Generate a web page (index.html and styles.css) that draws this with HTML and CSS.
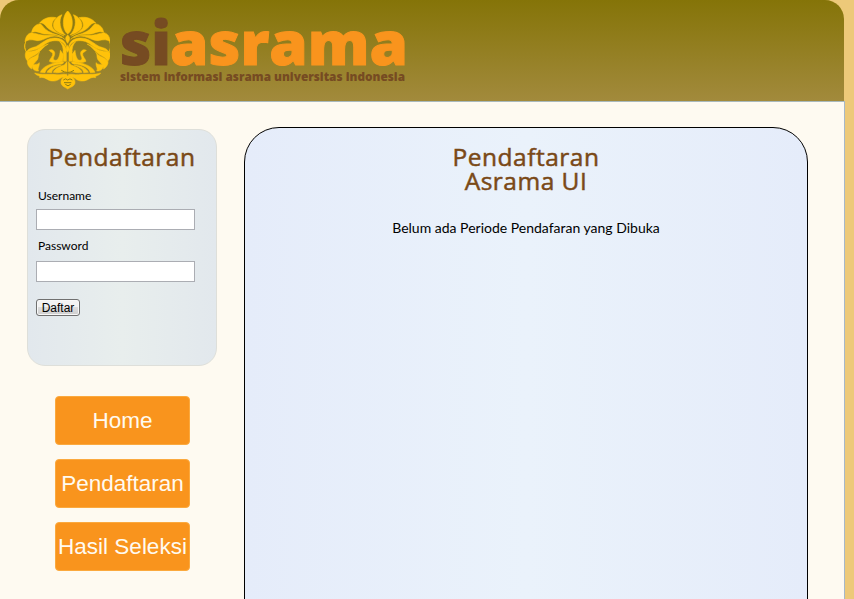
FILE: index.html
```html
<!DOCTYPE html>
<html lang="id">
<head>
<meta charset="utf-8">
<title>siasrama</title>
<link rel="stylesheet" href="styles.css">
</head>
<body>
<header class="header">
  <svg class="emblem" viewBox="72 30 258 240" aria-hidden="true">
    <defs>
      <g id="half">
        <path d="M186 44C170 50 160 62 160 75C160 92 177 99 196 105C180 90 175 62 186 44Z"/>
        <path d="M169 53C150 49 130 54 119 69C130 67 136 76 144 85C157 97 177 100 192 108C169 98 157 88 156 76C156 66 161 58 169 53Z"/>
        <path d="M121 71C105 73 97 84 95 97C108 92 117 98 128 101C154 105 178 100 194 118C181 105 161 103 145 94C133 87 129 78 121 71Z"/>
        <path d="M94 98C81 101 76 113 75 126C87 116 99 120 111 122C132 124 153 98 186 113C162 103 142 107 126 105C113 103 105 99 94 98Z"/>
        <path d="M77 126C71 137 73 147 79 156C88 142 100 144 111 138C131 126 145 110 174 115C193 119 200 132 200 145C194 127 181 122 165 122C142 122 133 137 117 145C104 151 90 150 80 157C75 147 73 137 77 126Z"/>
        <path d="M77 157C74 167 76 176 83 184C91 169 103 169 113 160C124 151 131 139 145 132C129 136 115 149 103 152C91 154 84 155 77 157Z"/>
        <path d="M82 185C81 192 86 201 95 207C96 194 106 188 113 178C117 167 113 164 119 157C107 173 92 170 82 185Z"/>
        <path d="M97 195C95 206 103 214 116 213C111 205 119 200 118 188C112 195 105 192 97 195Z"/>
        <path d="M147 151C155 146 166 152 164 163C163 171 157 176 163 180C174 185 179 169 181 151L190 163L188 184C176 188 158 190 148 184C150 175 159 169 158 161C156 155 151 157 147 151Z"/>
        <path d="M179 125C188 128 198 139 199 151L190 157C190 143 187 133 179 125Z"/>
        <path d="M190 153L199 149V184H190Z"/>
        <path d="M121 217C127 201 148 190 186 185C194 184 192 191 184 192C156 194 139 203 135 218Z"/>
        <path d="M141 217C147 204 164 196 184 195C163 203 156 209 155 218Z"/>
        <path d="M160 217C164 206 179 199 193 195L201 185V219C189 211 178 222 160 217Z"/>
        <path d="M104 219C123 226 148 221 171 224C185 225 190 220 201 224V231C182 227 178 245 158 243C141 243 137 229 119 233C122 226 109 228 104 219Z"/>
      </g>
    </defs>
    <g class="gold">
      <use href="#half"/>
      <use href="#half" transform="translate(406 0) scale(-1 1)"/>
      <path d="M203 33C195 39 190 53 190 68C190 84 196 97 203 102C211 97 217 84 217 68C217 53 211 39 203 33Z"/>
      <path d="M203 105C194 113 196 119 203 130C210 119 212 113 203 105ZM203 136L198 148L203 157L208 148Z"/>
      <path d="M203 228C191 228 183 236 183 247C183 257 191 260 203 267C216 260 225 257 225 247C225 236 216 228 203 228Z"/>
    </g>
    <path class="groove" d="M190 240Q197 233 203 240Q210 233 217 240M192 248H214M196 253Q204 262 212 253M184 211Q203 224 222 211"/>
  </svg>
  <svg class="wordmark" viewBox="0 0 296 80" role="img" aria-label="siasrama">
    <text class="word brown" x="4" y="55" textLength="51" lengthAdjust="spacingAndGlyphs">si</text>
    <text class="word orange" x="54" y="55" textLength="238" lengthAdjust="spacingAndGlyphs">asrama</text>
    <text class="tagline brown" x="4" y="71" textLength="285" lengthAdjust="spacingAndGlyphs">sistem informasi asrama universitas indonesia</text>
  </svg>
</header>
<main class="page">
  <aside class="sidebar">
    <form class="login">
      <h2 class="title">Pendaftaran</h2>
      <label class="label" for="user">Username</label>
      <input class="field" id="user" type="text">
      <label class="label second" for="pass">Password</label>
      <input class="field" id="pass" type="password">
      <button class="submit" type="button">Daftar</button>
    </form>
    <nav class="menu">
      <a class="item">Home</a>
      <a class="item">Pendaftaran</a>
      <a class="item">Hasil Seleksi</a>
    </nav>
  </aside>
  <section class="content">
    <h1 class="title">Pendaftaran<br>Asrama UI</h1>
    <p class="notice">Belum ada Periode Pendafaran yang Dibuka</p>
  </section>
</main>
</body>
</html>
```
FILE: styles.css
```css
* { box-sizing: border-box; }
body {
  margin: 0;
  height: 599px;
  overflow: hidden;
  background: #edc979;
  font-family: Lato, "Liberation Sans", sans-serif;
}
.header {
  display: flex;
  width: 844px;
  height: 101px;
  padding: 10px 0 0 24px;
  border-radius: 19px 19px 0 0;
  background: linear-gradient(#857408, #a28a3c);
}
.emblem { width: 86px; height: 80px; }
.wordmark { width: 296px; height: 80px; margin-left: 6px; overflow: visible; }
.gold { fill: #ffc20a; stroke: #ffc20a; stroke-width: 1.6; }
.groove { fill: none; stroke: #8b7b15; stroke-width: 3; }
.word { font: 800 60px "Open Sans", sans-serif; stroke-width: 1; }
.word.brown { stroke: #764b22; }
.word.orange { stroke: #f9941d; }
.tagline { font: 800 11.5px "Open Sans", sans-serif; }
.brown { fill: #764b22; }
.orange { fill: #f9941d; }
.page {
  display: flex;
  align-items: flex-start;
  width: 845px;
  height: 498px;
  padding-left: 27px;
  overflow: hidden;
  border-top: 1px solid #a9b9bd;
  border-right: 1px solid #a6b8c9;
  background: #fefaf1;
}
.sidebar { width: 190px; margin-top: 27px; }
.login {
  height: 237px;
  padding: 15px 8px 0;
  border: 1px solid #dedfda;
  border-radius: 18px;
  background: linear-gradient(90deg, #e2e8ed, #e8eeed 50%, #e2e8ed);
}
.title {
  margin: 0;
  font: 400 24.5px/24px "Open Sans", sans-serif;
  -webkit-text-stroke: 0.5px #7a4917;
  letter-spacing: 0.5px;
  text-align: center;
  color: #7a4917;
}
.label {
  display: block;
  margin: 19px 0 6px 2px;
  font-size: 12px;
  line-height: 15px;
}
.label.second { margin: 8px 0 8px 2px; }
.field {
  display: block;
  width: 159px;
  height: 21px;
  padding: 1px 3px;
  border: 1px solid #abadb3;
  background: #fff;
}
.submit {
  display: block;
  width: 44px;
  height: 17px;
  margin-top: 17px;
  padding: 1px 0 0;
  border: 1px solid #707070;
  border-radius: 3px;
  background: linear-gradient(#f3f3f3 0 50%, #dddddd 50%, #cfcfcf);
  box-shadow: inset 0 0 0 1px #f8f8f8;
  font: 12px/14px "Liberation Sans", sans-serif;
  color: #000;
}
.menu {
  display: flex;
  flex-direction: column;
  gap: 14px;
  width: 135px;
  margin: 30px 0 0 28px;
}
.item {
  height: 49px;
  border: 1px solid #fba93e;
  border-radius: 4px;
  background: #f9941d;
  font: 22.5px/47px "Liberation Sans", sans-serif;
  text-align: center;
  white-space: nowrap;
  color: #fffaf0;
}
.content {
  width: 564px;
  height: 600px;
  margin: 25px 0 0 27px;
  padding-top: 17px;
  border: 1px solid #000;
  border-radius: 35px;
  background: linear-gradient(90deg, #e5ecfa, #eaf2fb 50%, #e5ecfa);
}
.notice {
  margin: 26px 0 0;
  font-size: 14px;
  line-height: 18px;
  text-align: center;
  color: #000;
}
```
